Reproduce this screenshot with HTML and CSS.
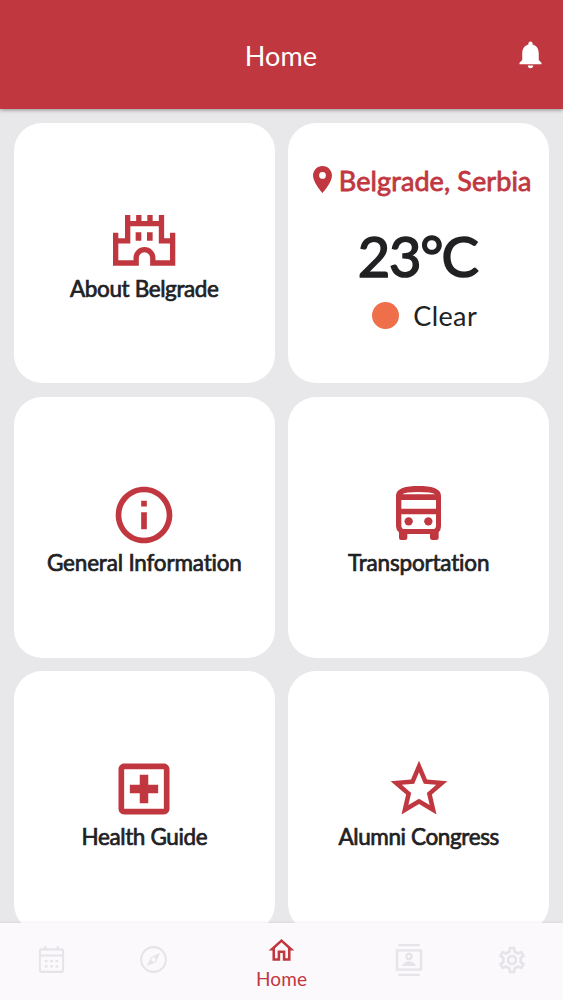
FILE: index.html
```html
<!DOCTYPE html>
<html lang="en">
<head>
    <meta charset="UTF-8">
    <meta name="viewport" content="width=device-width, initial-scale=1.0">
    <title>Home</title>
    <link rel="stylesheet" href="styles.css">
</head>
<body>
<header class="app-bar">
    <h1 class="title">Home</h1>
    <svg class="bell" viewBox="0 0 24 24"><path d="M12 22c1.1 0 2-.9 2-2h-4c0 1.1.9 2 2 2zm6-6v-5c0-3.07-1.64-5.64-4.5-6.32V4c0-.83-.67-1.5-1.5-1.5s-1.5.67-1.5 1.5v.68C7.63 5.36 6 7.92 6 11v5l-2 2v1h16v-1l-2-2z"/></svg>
</header>

<main class="grid">
    <div class="card">
        <div class="icon">
            <svg class="castle" viewBox="69 43 187 152">
                <path class="line" d="M77 96V187H138.5V172a25 25 0 0 1 50 0V187H248V96M77 120.5H113V43M113 69H214.5M214.5 43V120.5H248M146.5 43V69M180 43V69"/>
                <path d="M137 95h17v25h-17zM171 95h17v25h-17z"/>
            </svg>
        </div>
        <div class="label">About Belgrade</div>
    </div>

    <div class="card weather">
        <div class="place">
            <svg class="pin" viewBox="5 2 14 20"><path d="M12 2C8.13 2 5 5.13 5 9c0 5.25 7 13 7 13s7-7.75 7-13c0-3.87-3.13-7-7-7zm0 9.5a2.5 2.5 0 1 1 0-5 2.5 2.5 0 0 1 0 5z"/></svg>
            <span>Belgrade, Serbia</span>
        </div>
        <div class="temp">23<span class="degree">°</span>C</div>
        <div class="sky"><span class="sun"></span><span>Clear</span></div>
    </div>

    <div class="card">
        <div class="icon">
            <svg class="material" viewBox="0 0 24 24"><path d="M11 7h2v2h-2zm0 4h2v6h-2zm1-9C6.48 2 2 6.48 2 12s4.48 10 10 10 10-4.48 10-10S17.52 2 12 2zm0 18c-4.41 0-8-3.59-8-8s3.59-8 8-8 8 3.59 8 8-3.59 8-8 8z"/></svg>
        </div>
        <div class="label loose">General Information</div>
    </div>

    <div class="card">
        <div class="icon">
            <svg class="bus" viewBox="168 33 135 162">
                <path fill-rule="evenodd" d="M168 62C168 40 197 33 235.5 33S303 40 303 62V154Q303 165 296 172V188Q296 195 289 195H277Q270 195 270 188V177H202V188Q202 195 195 195H183Q177 195 177 188V172Q168 165 168 154ZM187 58H286Q275 51 235.5 51T187 58ZM184 75V101H288V75ZM184 118V152Q184 162 194 162H278Q288 162 288 152V118Z"/>
                <circle cx="206" cy="139" r="12.5"/>
                <circle cx="265" cy="139" r="12.5"/>
            </svg>
        </div>
        <div class="label loose">Transportation</div>
    </div>

    <div class="card">
        <div class="icon">
            <svg class="material" viewBox="0 0 24 24"><path d="M19 3H5c-1.1 0-2 .9-2 2v14c0 1.1.9 2 2 2h14c1.1 0 2-.9 2-2V5c0-1.1-.9-2-2-2zm0 16H5V5h14v14zm-8.5-2h3v-3.5H17v-3h-3.5V7h-3v3.5H7v3h3.5z"/></svg>
        </div>
        <div class="label">Health Guide</div>
    </div>

    <div class="card">
        <div class="icon">
            <svg class="material" viewBox="0 0 24 24"><path d="M22 9.24l-7.19-.62L12 2 9.19 8.63 2 9.24l5.46 4.73L5.82 21 12 17.27 18.18 21l-1.63-7.03L22 9.24zM12 15.4l-3.76 2.27 1-4.28-3.32-2.88 4.38-.38L12 6.1l1.71 4.04 4.38.38-3.32 2.88 1 4.28L12 15.4z"/></svg>
        </div>
        <div class="label">Alumni Congress</div>
    </div>
</main>

<nav class="tab-bar">
    <div class="tab">
        <svg viewBox="0 0 24 24">
            <path class="outline" d="M3 3h18q1.3 0 1.3 1.3v17.4q0 1.3-1.3 1.3H3q-1.3 0-1.3-1.3V4.3Q1.7 3 3 3zM2 8.5h20M6.5 0v3M17.5 0v3"/>
            <path d="M6 12.5h2.5v2H6zM10.8 12.5h2.5v2h-2.5zM15.5 12.5H18v2h-2.5zM6 17h2.5v2H6zM10.8 17h2.5v2h-2.5zM15.5 17H18v2h-2.5z"/>
        </svg>
    </div>
    <div class="tab">
        <svg viewBox="0 0 24 24">
            <circle class="outline" cx="12" cy="12" r="11"/>
            <path fill-rule="evenodd" d="M18 6l-3.8 8.2L6 18l3.8-8.2zM12 10.1a1.9 1.9 0 1 0 0 3.8 1.9 1.9 0 0 0 0-3.8z"/>
        </svg>
    </div>
    <div class="tab home active">
        <svg viewBox="0 0 24 24"><path d="M12 5.69l5 4.5V18h-2v-6H9v6H7v-7.81l5-4.5M12 3L2 12h3v8h6v-6h2v6h6v-8h3L12 3z"/></svg>
        <span>Home</span>
    </div>
    <div class="tab">
        <svg class="wide" viewBox="0 0 24 24">
            <path d="M4 0h16v1.7H4zM4 22.3h16V24H4z"/>
            <path class="outline" d="M3 4.8h18v14.4H3z"/>
            <circle class="outline" cx="12" cy="9.3" r="1.9"/>
            <path d="M7 16.5c0-2.2 3-3.5 5-3.5s5 1.3 5 3.5z"/>
        </svg>
    </div>
    <div class="tab">
        <svg class="wide" viewBox="0 0 24 24"><path d="M19.43 12.98c.04-.32.07-.64.07-.98s-.03-.66-.07-.98l2.11-1.65c.19-.15.24-.42.12-.64l-2-3.46c-.09-.16-.26-.25-.44-.25-.06 0-.12.01-.17.03l-2.49 1c-.52-.4-1.08-.73-1.69-.98l-.38-2.65C14.46 2.18 14.25 2 14 2h-4c-.25 0-.46.18-.49.42l-.38 2.65c-.61.25-1.17.59-1.69.98l-2.49-1c-.06-.02-.12-.03-.18-.03-.17 0-.34.09-.43.25l-2 3.46c-.13.22-.07.49.12.64l2.11 1.65c-.04.32-.07.65-.07.98s.03.66.07.98l-2.11 1.65c-.19.15-.24.42-.12.64l2 3.46c.09.16.26.25.44.25.06 0 .12-.01.17-.03l2.49-1c.52.4 1.08.73 1.69.98l.38 2.65c.03.24.24.42.49.42h4c.25 0 .46-.18.49-.42l.38-2.65c.61-.25 1.17-.59 1.69-.98l2.49 1c.06.02.12.03.18.03.17 0 .34-.09.43-.25l2-3.46c.12-.22.07-.49-.12-.64l-2.11-1.65zm-1.98-1.71c.04.31.05.52.05.73s-.02.43-.05.73l-.14 1.13.89.7 1.08.84-.7 1.21-1.27-.51-1.04-.42-.9.68c-.43.32-.84.56-1.25.73l-1.06.43-.16 1.13-.2 1.35h-1.4l-.19-1.35-.16-1.13-1.06-.43c-.43-.18-.83-.41-1.23-.71l-.91-.7-1.06.43-1.27.51-.7-1.21 1.08-.84.89-.7-.14-1.13c-.03-.31-.05-.54-.05-.74s.02-.43.05-.73l.14-1.13-.89-.7-1.08-.84.7-1.21 1.27.51 1.04.42.9-.68c.43-.32.84-.56 1.25-.73l1.06-.43.16-1.13.2-1.35h1.39l.19 1.35.16 1.13 1.06.43c.43.18.83.41 1.23.71l.91.7 1.06-.43 1.27-.51.7 1.21-1.07.85-.89.7.14 1.13zM12 8c-2.21 0-4 1.79-4 4s1.79 4 4 4 4-1.79 4-4-1.79-4-4-4zm0 6c-1.1 0-2-.9-2-2s.9-2 2-2 2 .9 2 2-.9 2-2 2z"/></svg>
    </div>
</nav>
</body>
</html>
```

FILE: styles.css
```css
* {
    margin: 0;
    padding: 0;
    box-sizing: border-box;
}

body {
    font-family: Lato, sans-serif;
    background: #e8e8ea;
    height: 1000px;
    display: flex;
    flex-direction: column;
    overflow: hidden;
    color: #212124;
}

svg {
    display: block;
    fill: currentColor;
    overflow: visible;
}

.app-bar {
    flex: none;
    height: 109px;
    padding: 0 16px 0 48px;
    display: flex;
    align-items: center;
    background: #c1373f;
    color: white;
    box-shadow: 0 1px 4px rgba(0, 0, 0, 0.4);
    z-index: 1;
}

.title {
    flex: 1;
    text-align: center;
    font-size: 27px;
    font-weight: 400;
    letter-spacing: 0.1px;
    padding-top: 2px;
}

.bell {
    width: 33px;
    height: 33px;
}

.grid {
    flex: 1;
    min-height: 0;
    overflow: hidden;
    display: grid;
    grid-template-columns: 1fr 1fr;
    grid-auto-rows: 260.7px;
    gap: 13.7px;
    padding: 13.5px 14px 0;
}

.card {
    background: white;
    border-radius: 28px;
    display: flex;
    flex-direction: column;
    align-items: center;
    padding-top: 84px;
}

.icon {
    height: 68px;
    display: flex;
    align-items: center;
    color: #c1373f;
}

.material {
    width: 68px;
    height: 68px;
}

.castle {
    width: 62.3px;
    height: 50.7px;
}

.castle .line {
    fill: none;
    stroke: currentColor;
    stroke-width: 16;
}

.bus {
    width: 45px;
    height: 54px;
    margin-top: -3px;
}

.label {
    font-size: 22.5px;
    line-height: 28px;
    letter-spacing: -0.38px;
    white-space: nowrap;
    -webkit-text-stroke: 0.7px currentColor;
}

.label.loose {
    letter-spacing: -0.18px;
}

.weather {
    padding-top: 41px;
}

.place {
    display: flex;
    align-items: center;
    gap: 7px;
    margin-left: 7px;
    color: #c1373f;
    font-size: 27px;
    line-height: 34px;
    letter-spacing: 0.1px;
    white-space: nowrap;
    -webkit-text-stroke: 0.8px currentColor;
}

.pin {
    width: 19px;
    height: 27px;
    margin-top: -3px;
    -webkit-text-stroke: 0;
}

.temp {
    margin: 24px 2px 0 0;
    font-size: 56px;
    line-height: 68px;
    letter-spacing: -1.2px;
    -webkit-text-stroke: 1.6px currentColor;
}

.degree {
    letter-spacing: -2px;
}

.sky {
    display: flex;
    align-items: center;
    gap: 14px;
    margin: 9px 0 0 12px;
    font-size: 27px;
    line-height: 34px;
    letter-spacing: 0.4px;
}

.sun {
    width: 27px;
    height: 27px;
    border-radius: 50%;
    background: #ef6f4a;
}

.tab-bar {
    flex: none;
    height: 77px;
    display: flex;
    background: #fbf9fc;
    box-shadow: 0 -1px 2px rgba(0, 0, 0, 0.06);
    z-index: 1;
}

.tab {
    flex: 1;
    display: flex;
    flex-direction: column;
    align-items: center;
    padding-top: 23px;
    color: #e6e4e8;
}

.tab svg {
    width: 27px;
    height: 27px;
}

.tab .outline {
    fill: none;
    stroke: currentColor;
    stroke-width: 1.8;
}

.tab .wide {
    width: 32px;
    height: 32px;
    margin-top: -2px;
}

.tab.home {
    flex: 1.5;
    padding-top: 12px;
}

.tab.home svg {
    width: 31px;
    height: 31px;
}

.tab.active {
    color: #c1373f;
    font-size: 19px;
    line-height: 25px;
    letter-spacing: 0.1px;
}
```
